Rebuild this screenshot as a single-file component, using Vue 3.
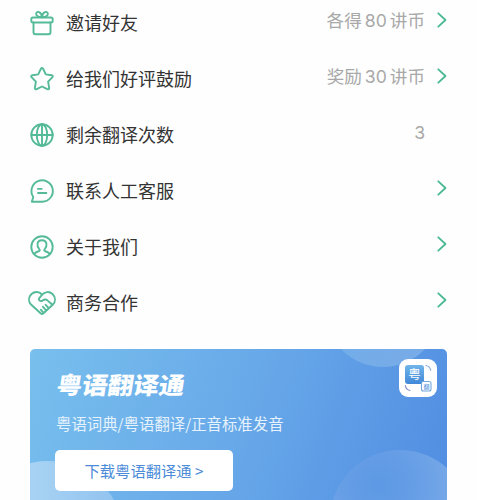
<script setup>
const rows = [
  { icon: 'gift', label: '邀请好友', value: ['各得', '80', '讲币'], arrow: true },
  { icon: 'star', label: '给我们好评鼓励', value: ['奖励', '30', '讲币'], arrow: true },
  { icon: 'globe', label: '剩余翻译次数', value: ['3'], arrow: false },
  { icon: 'chat', label: '联系人工客服', value: [], arrow: true },
  { icon: 'person', label: '关于我们', value: [], arrow: true },
  { icon: 'heart', label: '商务合作', value: [], arrow: true },
]
</script>

<template>
  <main class="page">
    <ul class="menu">
      <li v-for="row in rows" :key="row.icon" class="row">
        <svg class="icon" viewBox="0 0 28 28">
          <g v-if="row.icon === 'gift'">
            <rect x="3.3" y="8.5" width="21.4" height="5" rx="1.8" />
            <path d="M5.5 13.500v9.700q0 2 2 2h13q2 0 2-2v-9.700M14 8.300C9.700 8 7.700 6.400 8.200 4.300 9 1.800 13.300 2.200 14 8.300M14 8.300c4.300-.3 6.300-1.900 5.800-4C19 1.800 14.700 2.200 14 8.300" />
          </g>
          <path v-else-if="row.icon === 'star'" d="M12.800 4q1.200-2 2.400 0l2.600 5.400 5.700.8q2.200.5.8 2.200l-4.200 4.300 1 6q.1 2.200-1.800 1.500L14 21.500l-5.300 2.700q-1.900.7-1.800-1.500l1-6-4.200-4.300q-1.400-1.700.8-2.200l5.700-.8z" />
          <g v-else-if="row.icon === 'globe'">
            <circle cx="14" cy="14" r="10.7" />
            <ellipse cx="14" cy="14" rx="5.2" ry="10.7" />
            <path d="M3.3 14h21.4M14 3.3v21.4" />
          </g>
          <g v-else-if="row.icon === 'chat'">
            <path d="M3.8 24.700h10.400A10.700 10.700 0 1 0 5.300 20L3.800 24.700" />
            <path d="M10 11.900h3.600M10 16h8.400" />
          </g>
          <g v-else-if="row.icon === 'person'">
            <circle cx="14" cy="14" r="10.7" />
            <path d="M6.200 21.100c1-1.700 2.600-2.400 5-3.100.9-.5.7-1.400-.1-2.200-1.200-1.300-1.800-2.800-1.600-4.600.2-2.500 2-4 4.500-4s4.300 1.500 4.500 4c.2 1.800-.4 3.300-1.600 4.600-.8.8-1 1.700-.1 2.200 2.400.7 4 1.400 5 3.100" />
          </g>
          <path v-else d="M14 5.500C11 2.300 6.500 2.300 3.500 5 .2 8.200.2 12.600 3.300 15.800l9.500 8.700q1.200 1 2.400 0l9.500-8.700C27.800 12.600 27.800 8.200 24.500 5c-3-2.800-7.500-2.500-10.300.6l-2.700 3.200c-1.600 2.200.8 4.200 3 2.800 1.600-1.200 3.200-1.600 4.600-.5l5 4.400M13 20.800l1.900 2.300M15 17.800l2.600 3M17.700 15.800l2.500 2.800" />
        </svg>
        <span class="label">{{ row.label }}</span>
        <span class="value"><span v-for="part in row.value" :key="part">{{ part }}</span></span>
        <svg class="chevron" viewBox="0 0 10 16">
          <path v-if="row.arrow" d="M1.300 1.300 8.500 8l-7.200 6.700" />
        </svg>
      </li>
    </ul>

    <section class="banner">
      <i class="bubble top"></i>
      <i class="bubble left"></i>
      <i class="bubble right"></i>
      <div class="copy">
        <h2 class="title">粤语翻译通</h2>
        <p class="sub">粤语词典/粤语翻译/正音标准发音</p>
        <button class="download">下载粤语翻译通 &gt;</button>
      </div>
      <div class="logo">
        <span class="tile">粤</span>
        <svg class="marks" viewBox="0 0 38 38">
          <path d="M27 6.500q4 .8 4.700 4.800" stroke="#86afe2" />
          <path d="M6.300 26.500q.7 4.300 4.700 5" stroke="#7689d2" />
          <rect x="22.500" y="22.500" width="9.500" height="9.500" rx="2" fill="#fff" stroke="#72a9df" />
        </svg>
        <span class="mini">翻</span>
      </div>
    </section>
  </main>
</template>

<style>
body {
  background: #fefefe;
}
</style>

<style scoped>
.page {
  box-sizing: border-box;
  width: 477px;
  height: 500px;
  padding: 0 30px;
  overflow: hidden;
  font-family: "Noto Sans CJK SC", sans-serif;
}
.menu {
  list-style: none;
  margin: -5px 0 0;
  padding: 0;
}
.row {
  display: flex;
  align-items: center;
  height: 56px;
}
.icon {
  width: 28px;
  height: 28px;
  margin-left: -2px;
  fill: none;
  stroke: #54ba98;
  stroke-width: 1.9;
  stroke-linecap: round;
  stroke-linejoin: round;
}
.label {
  margin: 0 0 2px 10px;
  font-size: 18px;
  line-height: 26px;
  color: #333;
}
.value {
  display: flex;
  gap: 3px;
  margin: 0 12px 5px auto;
  font-family: "Inter", "Noto Sans CJK SC", sans-serif;
  font-size: 17.6px;
  font-weight: 400;
  line-height: 26px;
  color: #a8a8a8;
}
.chevron {
  width: 10px;
  height: 16px;
  margin-bottom: 6px;
  fill: none;
  stroke: #4bb894;
  stroke-width: 1.8;
  stroke-linecap: round;
  stroke-linejoin: round;
}
.banner {
  position: relative;
  display: flex;
  justify-content: space-between;
  box-sizing: border-box;
  height: 190px;
  margin-top: 18px;
  padding: 10px 10px 0 26px;
  border-radius: 5px;
  overflow: hidden;
  background: linear-gradient(110deg, #78bfed 0%, #68a9e9 48%, #5592e3 88%, #508ce1 100%);
}
.bubble {
  position: absolute;
  border-radius: 50%;
}
.bubble.top {
  left: 295px;
  top: -98px;
  width: 116px;
  height: 116px;
  background: linear-gradient(90deg, #72aee9, #79aae8);
}
.bubble.left {
  left: -57px;
  top: 112px;
  width: 150px;
  height: 150px;
  background: linear-gradient(90deg, #a7d2f3 40%, #90c2ef);
}
.bubble.right {
  left: 300px;
  top: 101px;
  width: 140px;
  height: 140px;
  background: radial-gradient(circle at 35% 25%, #5c98e4 0, #689fe6 30%, #7aabe8 60%);
}
.copy {
  position: relative;
}
.title {
  width: 128px;
  margin: 10px 0 0 1px;
  font-size: 25.6px;
  font-weight: 900;
  line-height: 30px;
  white-space: nowrap;
  color: #fff;
  transform: skewX(-9deg) scaleY(0.92);
}
.sub {
  margin: 12px 0 0 0;
  font-size: 15.4px;
  line-height: 24px;
  white-space: nowrap;
  color: #e6f2fc;
}
.download {
  display: block;
  width: 178px;
  height: 41px;
  margin: 15px 0 0 -1px;
  padding: 0 0 1px;
  border: 0;
  border-radius: 5px;
  background: #fff;
  font-family: inherit;
  font-size: 15.3px;
  color: #4c8bd8;
}
.logo {
  position: relative;
  width: 38px;
  height: 38px;
  border-radius: 9px;
  background: #fff;
}
.tile {
  position: absolute;
  left: 6px;
  top: 6px;
  width: 19px;
  height: 19px;
  border-radius: 3px;
  background: linear-gradient(#70b5ea, #4288d8);
  font-size: 12.5px;
  line-height: 18px;
  text-align: center;
  color: #fff;
}
.marks {
  position: absolute;
  inset: 0;
  fill: none;
  stroke-width: 1.1;
  stroke-linecap: round;
}
.mini {
  position: absolute;
  left: 24px;
  top: 24px;
  width: 7px;
  font-size: 6px;
  line-height: 7px;
  text-align: center;
  color: #4f8fdb;
}
</style>
